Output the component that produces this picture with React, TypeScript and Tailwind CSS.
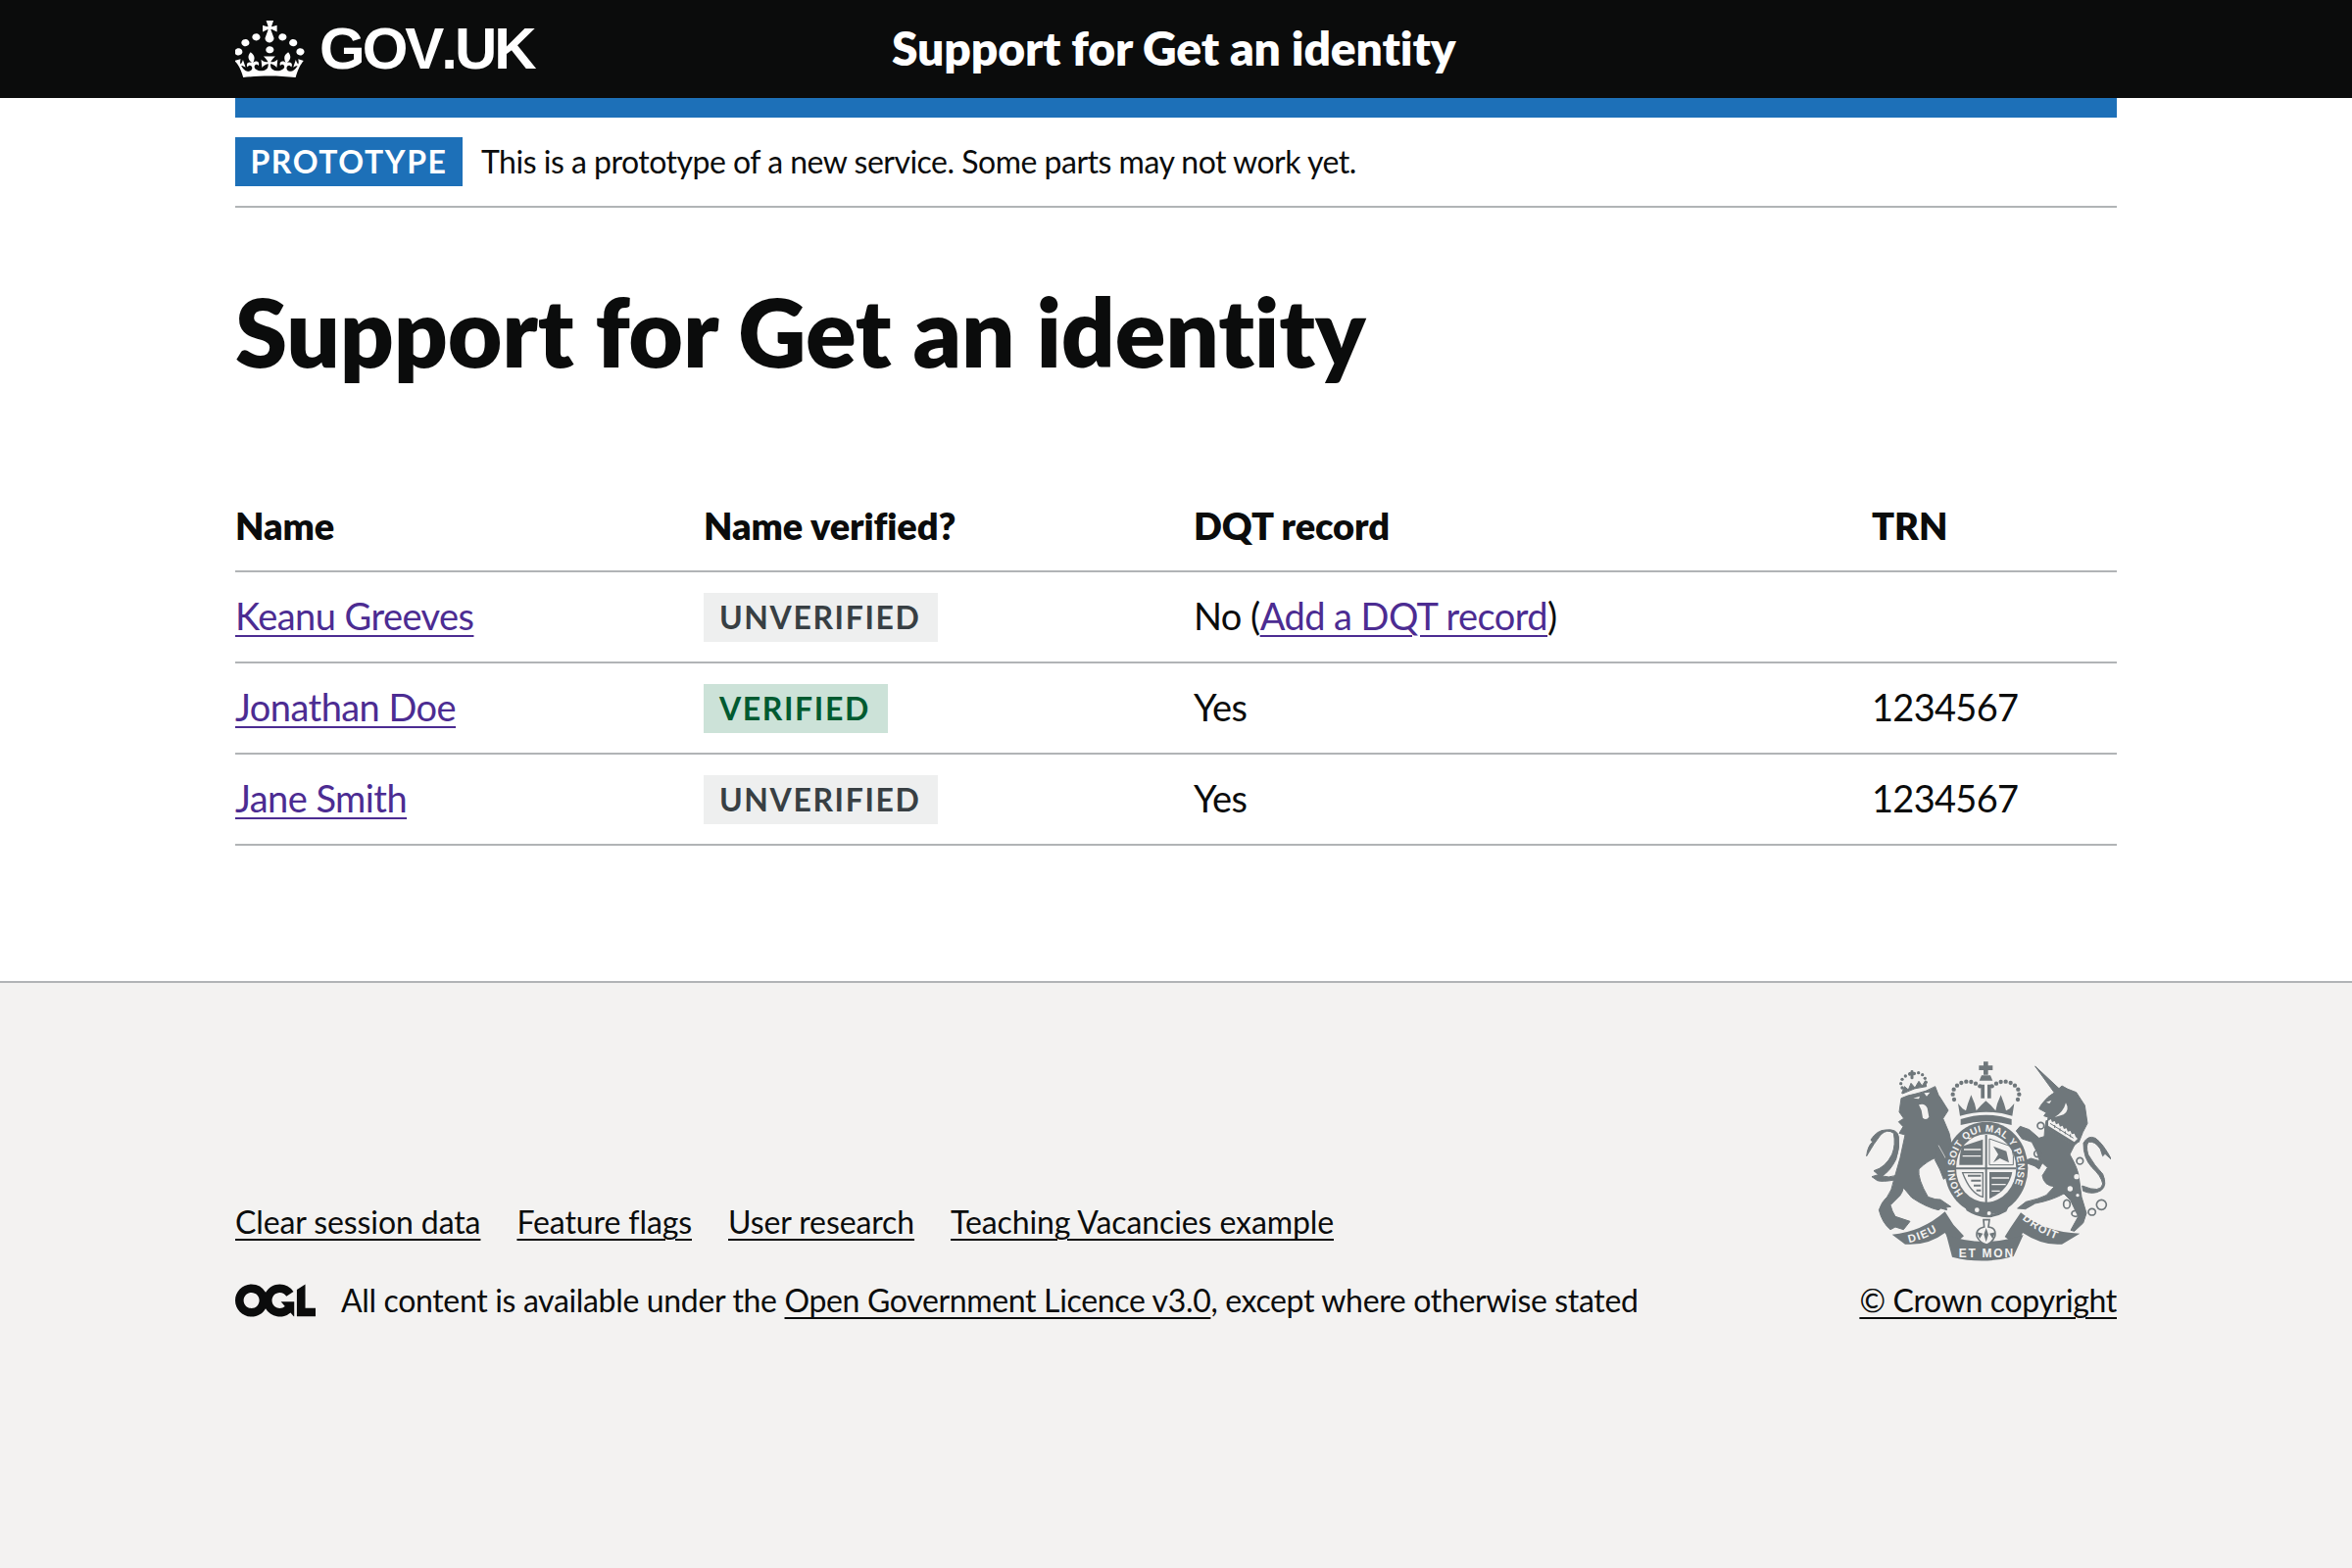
const rows = [
  { name: 'Keanu Greeves', verified: false, dqt: false, trn: '' },
  { name: 'Jonathan Doe', verified: true, dqt: true, trn: '1234567' },
  { name: 'Jane Smith', verified: false, dqt: true, trn: '1234567' },
]

const footerLinks = ['Clear session data', 'Feature flags', 'User research', 'Teaching Vacancies example']

const linkClass = 'underline decoration-[2px] underline-offset-[5px]'
const crestText = "font-['Liberation_Sans',sans-serif] font-bold"

function CrownLogo() {
  return (
    <svg viewBox="0 0 32.6 30" preserveAspectRatio="none" className="w-[72px] h-[58px] fill-white shrink-0">
      <path d="M22.6 10.4c-1 .4-2-.1-2.4-1-.4-.9.1-2 1-2.4.9-.4 2 .1 2.4 1s-.1 2-1 2.4m-5.9 6.7c-.9.4-2-.1-2.4-1-.4-.9.1-2 1-2.4.9-.4 2 .1 2.4 1s-.1 2-1 2.4m10.8-3.7c-1 .4-2-.1-2.4-1-.4-.9.1-2 1-2.4.9-.4 2 .1 2.4 1s0 2-1 2.4m3.3 4.8c-1 .4-2-.1-2.4-1-.4-.9.1-2 1-2.4.9-.4 2 .1 2.4 1s-.1 2-1 2.4M17 4.7l2.3 1.2V2.5l-2.3.7-.2-.2.9-3h-3.4l.9 3-.2.2c-.1.1-2.3-.7-2.3-.7v3.4L15 4.7c.1.1.1.2.2.2l-1.3 4c-.1.2-.1.4-.1.6 0 1.1.8 2 1.9 2.2h.3c1-.2 1.9-1.1 1.9-2.2 0-.2 0-.4-.1-.6l-1.3-4c-.1-.1 0-.2.1-.2m-7.6 5.7c.9.4 2-.1 2.4-1 .4-.9-.1-2-1-2.4-.9-.4-2 .1-2.4 1s0 2 1 2.4m-5 3c.9.4 2-.1 2.4-1 .4-.9-.1-2-1-2.4-.9-.4-2 .1-2.4 1s.1 2 1 2.4m-3.2 4.8c.9.4 2-.1 2.4-1 .4-.9-.1-2-1-2.4-.9-.4-2 .1-2.4 1s0 2 1 2.4m14.8 11c4.4 0 8.6.3 12.3.8 1.1-4.5 2.4-7 3.7-8.8l-2.5-.9c.2 1.3.3 1.9 0 2.7-.4-.4-.8-1.1-1.1-2.3l-1.2 4c.7-.5 1.3-.8 2-.9-1.1 2.5-2.6 3.1-3.5 3-1.1-.2-1.7-1.2-1.5-2.1.3-1.2 1.5-1.5 2.1-.1 1.1-2.3-.8-3-2-2.3 1.9-1.9 2.1-3.5.6-5.6-2.1 1.6-2.1 3.2-1.2 5.5-1.2-1.4-3.2-.6-2.5 1.6.9-1.4 2.1-.5 1.9.8-.2 1.1-1.7 2.1-3.5 1.9-2.7-.2-2.9-2.1-2.9-3.6.7-.1 1.9.5 2.9 1.9l.4-4.3c-1.1 1.1-2.1 1.4-3.2 1.4.4-1.2 2.1-3 2.1-3h-5.4s1.7 1.9 2.1 3c-1.1 0-2.1-.2-3.2-1.4l.4 4.3c1-1.4 2.2-2 2.9-1.9-.1 1.5-.2 3.4-2.9 3.6-1.9.2-3.4-.8-3.5-1.9-.2-1.3 1-2.2 1.9-.8.7-2.3-1.2-3-2.5-1.6.9-2.2.9-3.9-1.2-5.5-1.5 2-1.3 3.7.6 5.6-1.2-.7-3.1 0-2 2.3.6-1.4 1.8-1.1 2.1.1.2.9-.3 1.9-1.5 2.1-.9.2-2.4-.5-3.5-3 .6 0 1.2.3 2 .9l-1.2-4c-.3 1.1-.7 1.9-1.1 2.3-.3-.8-.2-1.4 0-2.7l-2.9.9C1.3 23 2.6 25.5 3.7 30c3.7-.5 7.9-.8 12.3-.8" />
    </svg>
  )
}

function OglLogo() {
  return (
    <svg viewBox="0 0 483.2 195.7" className="w-[82px] h-[34px] fill-[#0b0c0c] shrink-0">
      <path d="M421.5 142.8V.1l-50.7 32.3v161.1h112.4v-50.7zm-122.3-9.6A47.12 47.12 0 0 1 221 97.8c0-26 21.1-47.1 47.1-47.1 16.7 0 31.4 8.7 39.7 21.8l42.7-27.2A97.63 97.63 0 0 0 268.1 0c-36.5 0-68.3 20.1-85.1 49.7A98 98 0 0 0 97.8 0C43.9 0 0 43.9 0 97.8s43.9 97.8 97.8 97.8c36.5 0 68.3-20.1 85.1-49.7a97.76 97.76 0 0 0 149.6 25.4l19.4 22.2h3v-87.8h-80l24.3 27.5zM97.8 145c-26 0-47.1-21.1-47.1-47.1s21.1-47.1 47.1-47.1 47.2 21 47.2 47S123.8 145 97.8 145" />
    </svg>
  )
}

// royal arms, drawn by hand over a 3x crop of the reference
function Crest() {
  const grey = '#6f777b'
  const bg = '#f3f2f1'
  const crownDots = [
    [400, 192], [396, 176], [399, 161], [409, 149], [422, 141], [437, 137], [452, 138], [466, 143], [479, 151],
    [595, 192], [599, 176], [596, 161], [586, 149], [573, 141], [558, 137], [543, 138], [529, 143], [516, 151],
  ]
  const lionDots = [
    [241, 156], [237, 143], [241, 130], [251, 120], [264, 114], [278, 112], [291, 110], [303, 116], [311, 127], [314, 139],
  ]
  return (
    <svg viewBox="130 75 750 612" className="w-[250px] h-[204px] block shrink-0" fill={grey}>
      {/* lion */}
      <g transform="translate(120 60)" stroke={grey} strokeWidth="3" strokeLinejoin="round">
        <path d="M118 128 Q140 118 160 115 Q195 108 222 92 L232 118 L240 130 L262 165 L246 190 L265 235 L275 285 L250 315 L225 310 Q200 318 172 345 Q168 375 200 430 Q225 440 238 438 L270 460 L255 462 L258 470 L240 465 L232 470 Q195 462 150 432 L125 402 Q122 415 115 425 L85 455 Q90 475 100 490 L145 505 L125 530 L100 522 L85 530 Q60 510 50 470 Q58 445 75 430 Q90 410 95 380 L115 310 L130 240 L112 235 L124 215 L110 200 L126 190 L112 170 Z" />
        <path d="M225 262 L268 335 L287 372 L272 366 L270 378 L258 368 L248 376 L236 345 L222 318 Z" />
        <path d="M98 378 Q60 385 45 380 L28 368 L48 362 L34 350 Q70 340 90 300 Q102 270 95 235 Q75 220 55 240 Q35 265 12 305 Q15 275 30 262 L25 255 Q45 225 70 225 Q105 220 110 245 Q115 280 102 315 Q85 350 60 366 Q80 372 100 365 Z" />
        <path d="M155 128 L175 122 L172 130 Z M188 112 L206 110 L196 122 Z" fill={bg} stroke="none" />
        <path d="M172 148 Q190 142 198 158 L203 185 Q195 198 184 188 L180 165 Z" fill={bg} stroke="none" />
        <path d="M232 272 L270 340" stroke={bg} strokeWidth="2" fill="none" />
        {/* lion's crown */}
        <path d="M120 112 L128 92 L140 102 L148 82 L160 96 L172 76 L182 90 L192 74 L195 92 Q160 94 122 114 Z" />
        <path d="M148 44 H154 V50 H160 V56 H154 V68 H148 V56 H142 V50 H148 Z" />
      </g>
      {lionDots.map(([x, y]) => <circle key={`${x}-${y}`} cx={x} cy={y} r="5" />)}

      {/* unicorn */}
      <g transform="translate(510 60)" stroke={grey} strokeWidth="3" strokeLinejoin="round">
        <path d="M138 30 L213 100 L197 111 Z" />
        <path d="M197 111 L220 90 L238 100 L264 110 L290 150 L298 205 L284 232 L272 262 L175 205 L178 186 L165 182 L172 172 L150 160 L158 146 Q178 120 197 111 Z" />
        <path d="M172 196 L274 258 L258 272 L168 218 Z" />
        <path d="M168 218 L258 272 L244 300 Q270 345 272 370 L280 430 L295 480 L285 510 L258 535 L247 532 L270 490 L246 440 L226 420 Q190 440 138 450 L108 467 L84 465 L110 445 Q150 436 172 425 L197 398 Q165 396 160 365 L176 340 L160 326 L150 345 L136 335 L100 322 L125 312 L152 320 L143 292 L128 262 L98 252 L80 228 L92 214 L120 224 L150 250 L166 245 Z" />
        <path d="M282 396 Q340 420 345 390 Q340 365 312 340 Q285 310 286 265 Q300 240 322 250 Q345 265 372 316 L352 298 L345 305 L338 284 Q322 258 302 262 Q292 270 300 300 Q320 335 345 360 Q360 395 340 410 Q315 425 285 412 Z" />
        <path d="M178 197 L186 192 L190 201 L198 198 L202 208 L210 205 L214 215 L222 212 L226 222 L234 220 L238 230 L246 228 L250 238 L258 236 L262 246 L268 252 L258 262 L178 212 Z" fill={bg} stroke="none" />
        <path d="M184 205 L255 250 M198 210 V219 M214 220 V229 M230 229 V238 M246 238 V247" strokeWidth="3" fill="none" />
        <path d="M232 142 Q245 165 225 178 L198 186 Q225 170 232 142 Z" fill={bg} stroke="none" />
        <path d="M172 140 L188 134 L182 144 Z" fill={bg} stroke="none" />
        <g fill="none" strokeWidth="5">
          <circle cx="155" cy="212" r="10" />
          <circle cx="145" cy="298" r="10" />
          <circle cx="275" cy="320" r="10" />
          <ellipse cx="235" cy="452" rx="10" ry="13" />
          <ellipse cx="262" cy="481" rx="12" ry="9" />
          <ellipse cx="312" cy="476" rx="11" ry="10" />
          <circle cx="341" cy="454" r="15" />
        </g>
        <circle cx="265" cy="368" r="8" fill={bg} stroke="none" />
        <circle cx="245" cy="405" r="8" fill={bg} stroke="none" />
        <circle cx="268" cy="425" r="5" fill={bg} stroke="none" />
      </g>

      {/* crown over the shield */}
      {crownDots.map(([x, y]) => <circle key={`${x}-${y}`} cx={x} cy={y} r="6.5" />)}
      <path d="M490 76 H504 V88 H518 V102 H504 V116 H490 V102 H476 V88 H490 Z" />
      <path d="M484 118 H511 L518 134 H477 Z" />
      <path d="M482 146 H493 V188 H482 Z M502 146 H513 V188 H502 Z" />
      <path d="M412 204 L426 220 L436 226 L442 205 L452 178 L463 205 L468 226 L482 210 L497 196 L513 210 L527 226 L532 205 L543 178 L553 205 L559 226 L570 220 L584 204 L578 242 Q498 218 418 242 Z" />
      <path d="M420 252 Q498 226 576 252 L576 270 Q498 248 420 270 Z" />

      {/* shield in its garter */}
      <ellipse cx="498" cy="402" rx="128" ry="142" />
      <ellipse cx="498" cy="402" rx="92" ry="104" fill={bg} />
      <path d="M406 403 H590 M498 300 V510" stroke={grey} strokeWidth="6" fill="none" />
      <path d="M424 335 L488 314 V392 H416 Q416 360 424 335 Z" />
      <path d="M508 312 L576 336 Q584 365 581 392 H508 Z" fill="none" stroke={grey} strokeWidth="3" />
      <path d="M520 335 L560 350 L568 385 L540 372 L520 385 L535 360 Z" />
      <path d="M426 416 H488 V490 Q450 480 426 416 Z" fill="none" stroke={grey} strokeWidth="4" />
      <path d="M442 425 L482 425 M452 440 L482 440 M460 455 L482 455 M468 470 L482 470" stroke={grey} strokeWidth="6" fill="none" />
      <path d="M508 414 H578 Q568 470 508 495 Z" />
      <path d="M430 345 H482 M426 365 H482 M515 432 H568 M515 452 H558 M515 472 H540" stroke={bg} strokeWidth="4" fill="none" />
      <path id="garter" d="M428 480 A97 112 0 1 1 568 480" fill="none" stroke="none" />
      <text fill={bg} fontSize="30" letterSpacing="1.5" className={crestText}>
        <textPath href="#garter">HONI SOIT QUI MAL Y PENSE</textPath>
      </text>

      {/* buckle and belt end */}
      <path d="M428 505 Q498 580 572 510 L560 535 Q498 572 438 532 Z" />
      <circle cx="470" cy="530" r="7" fill={bg} />
      <circle cx="507" cy="540" r="6" fill={bg} />

      {/* motto */}
      <path d="M210 605 Q300 598 372 535 L398 575 L430 610 L395 640 L372 600 Q320 640 250 635 Z" />
      <path d="M785 602 Q680 600 604 538 L572 585 L555 612 L592 640 L610 600 Q670 640 730 635 Z" />
      <path d="M376 606 Q490 648 612 606 L582 672 Q490 698 394 674 Z" />
      <path id="dieu" d="M262 630 Q325 617 382 572" fill="none" />
      <text fill={bg} fontSize="34" letterSpacing="4" className={crestText}>
        <textPath href="#dieu">DIEU</textPath>
      </text>
      <path id="droit" d="M608 558 Q665 608 738 628" fill="none" />
      <text fill={bg} fontSize="34" letterSpacing="4" className={crestText}>
        <textPath href="#droit">DROIT</textPath>
      </text>
      <text x="414" y="676" fill={bg} fontSize="36" textLength="166" className={crestText}>ET MON</text>
      <path d="M490 560 H508 L505 582 Q530 585 525 610 Q515 632 500 636 Q480 632 470 612 Q464 588 492 582 Z" fill={bg} stroke={grey} strokeWidth="5" />
      <path d="M498 585 L505 605 L498 628 L491 605 Z M470 598 L488 602 L478 618 Z M526 598 L508 602 L518 618 Z" />
    </svg>
  )
}

function Tag({ children, green }: { children: string; green?: boolean }) {
  return (
    <span
      className={`flex w-fit h-[50px] items-center pl-[16px] pr-[18px] text-[32px] font-bold tracking-[1.6px] ${
        green ? 'bg-[#cce2d8] text-[#005a30]' : 'bg-[#eeefef] text-[#383f43]'
      }`}
    >
      {children}
    </span>
  )
}

export default function App() {
  return (
    <div className="min-h-screen flex flex-col bg-white text-[#0b0c0c] font-['Lato',sans-serif] [font-variant-ligatures:none]">
      <header className="bg-[#0b0c0c] text-white">
        <div className="mx-[240px] h-[100px] flex items-center">
          <div className="w-[670px] flex items-center gap-[14px]">
            <CrownLogo />
            <span className="font-['Liberation_Sans',sans-serif] font-bold text-[60px] tracking-[-3px] [font-kerning:none] leading-none">GOV.UK</span>
          </div>
          <span className="pb-[3px] text-[48px] font-extrabold tracking-[-0.15px] leading-none">Support for Get an identity</span>
        </div>
      </header>

      <main className="mx-[240px]">
        <div className="h-[20px] bg-[#1d70b8]" />
        <div className="flex items-center gap-[19px] py-[20px] border-b-2 border-[#b1b4b6]">
          <span className="h-[50px] w-[232px] bg-[#1d70b8] text-white flex items-center justify-center text-[32px] font-bold tracking-[1.6px]">PROTOTYPE</span>
          <span className="text-[32px] tracking-[-0.5px]">This is a prototype of a new service. Some parts may not work yet.</span>
        </div>

        <h1 className="mt-[76px] mb-[103px] text-[96px] font-extrabold leading-[100px] tracking-[-0.2px]">Support for Get an identity</h1>

        <table className="w-full table-fixed border-collapse text-[38px] tracking-[-0.55px]">
          <colgroup>
            <col className="w-[478px]" />
            <col className="w-[500px]" />
            <col className="w-[692px]" />
            <col />
          </colgroup>
          <thead>
            <tr className="border-b-2 border-[#b1b4b6] h-[92px] text-left font-extrabold tracking-[-0.1px]">
              <th className="font-extrabold">Name</th>
              <th className="font-extrabold">Name verified?</th>
              <th className="font-extrabold">DQT record</th>
              <th className="font-extrabold">TRN</th>
            </tr>
          </thead>
          <tbody>
            {rows.map((row) => (
              <tr key={row.name} className="border-b-2 border-[#b1b4b6] h-[93px]">
                <td className="pb-[2px]">
                  <a className={`${linkClass} text-[#4c2c92]`}>{row.name}</a>
                </td>
                <td>
                  <Tag green={row.verified}>{row.verified ? 'VERIFIED' : 'UNVERIFIED'}</Tag>
                </td>
                <td className="pb-[2px]">
                  {row.dqt ? 'Yes' : (
                    <>
                      No (<a className={`${linkClass} text-[#4c2c92]`}>Add a DQT record</a>)
                    </>
                  )}
                </td>
                <td className="pb-[2px] tracking-[-0.7px]">{row.trn}</td>
              </tr>
            ))}
          </tbody>
        </table>
      </main>

      <footer className="mt-[138px] flex-1 bg-[#f3f2f1] border-t-2 border-[#b1b4b6] text-[32px] leading-[40px] tracking-[-0.34px]">
        <div className="mx-[240px] pt-[80px] flex justify-between items-end">
          <div>
            <ul className="flex gap-[37px] mb-[40px] tracking-[-0.1px]">
              {footerLinks.map((label) => (
                <li key={label}>
                  <a className={linkClass}>{label}</a>
                </li>
              ))}
            </ul>
            <div className="flex items-center gap-[26px]">
              <OglLogo />
              <span>
                All content is available under the <a className={linkClass}>Open Government Licence v3.0</a>, except where otherwise stated
              </span>
            </div>
          </div>
          <div className="flex flex-col items-center">
            <Crest />
            <a className={`${linkClass} mt-[20px]`}>© Crown copyright</a>
          </div>
        </div>
      </footer>
    </div>
  )
}
